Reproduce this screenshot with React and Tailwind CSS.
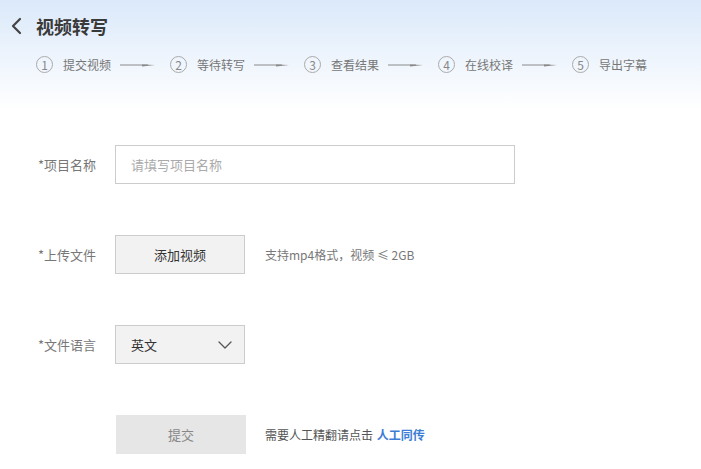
import React from 'react';

const font = { fontFamily: '"Noto Sans CJK SC", "Noto Sans", sans-serif' };

const steps = ['提交视频', '等待转写', '查看结果', '在线校译', '导出字幕'];

const StepArrow = () => (
  <svg width="36" height="6" viewBox="0 0 36 6" className="ml-[9px] mr-[14px]">
    <line x1="0" y1="3" x2="28" y2="3" stroke="#8a8a8a" strokeWidth="1" />
    <path d="M22 2.4 L35 3 L22 4.4 Z" fill="#8a8a8a" />
  </svg>
);

const ChevronDown = () => (
  <svg width="14" height="8" viewBox="0 0 14 8" fill="none">
    <path d="M1 1l6 6 6-6" stroke="#555" strokeWidth="1.3" strokeLinecap="round" strokeLinejoin="round" />
  </svg>
);

const App = () => {
  return (
    <div className="w-[701px] h-[469px] bg-white overflow-hidden" style={font}>
      {/* 头部 */}
      <div className="h-[110px] bg-gradient-to-b from-[#dbe9fa] to-white">
        <div className="flex items-center h-[24px] translate-y-[14px] pl-[10px]">
          <svg width="12" height="18" viewBox="0 0 12 18" fill="none">
            <path d="M10 2L3 9l7 7" stroke="#444" strokeWidth="2.2" strokeLinecap="round" strokeLinejoin="round" />
          </svg>
          <span className="ml-[14px] text-[18px] font-bold text-[#3a3a3a] leading-none">视频转写</span>
        </div>
        <div className="flex items-center pl-[36px] mt-[32px]">
          {steps.map((s, i) => (
            <div key={s} className="flex items-center">
              <span className="w-[17px] h-[17px] rounded-full border border-[#aaa] text-[#888] text-[12px] flex items-center justify-center leading-none">
                {i + 1}
              </span>
              <span className="ml-[10px] text-[12px] text-[#777] leading-none">{s}</span>
              {i < steps.length - 1 && <StepArrow />}
            </div>
          ))}
        </div>
      </div>

      {/* 表单 */}
      <div className="pl-[38px] pt-[35px] flex flex-col gap-[51px] text-[13px]">
        <div className="flex items-center h-[39px]">
          <label className="w-[77px] text-[#777]">*项目名称</label>
          <input
            className="w-[400px] h-[39px] border border-[#ccc] px-[15px] text-[13px] text-[#333] placeholder:text-[#aaa] outline-none"
            placeholder="请填写项目名称"
          />
        </div>

        <div className="flex items-center h-[39px]">
          <label className="w-[77px] text-[#777]">*上传文件</label>
          <button className="w-[130px] h-[39px] bg-[#f2f2f2] border border-[#ccc] text-[#333] text-[13px]">
            添加视频
          </button>
          <span className="ml-[20px] text-[12px] text-[#777]">支持mp4格式，视频 ≤ 2GB</span>
        </div>

        <div className="flex items-center h-[39px]">
          <label className="w-[77px] text-[#777]">*文件语言</label>
          <div className="w-[130px] h-[39px] bg-[#f2f2f2] border border-[#ccc] flex items-center justify-between pl-[15px] pr-[12px]">
            <span className="text-[#333]">英文</span>
            <ChevronDown />
          </div>
        </div>

        <div className="flex items-center h-[39px]">
          <div className="w-[78px]" />
          <button className="w-[130px] h-[39px] bg-[#e6e6e6] text-[#888] text-[13px]">提交</button>
          <span className="ml-[19px] text-[12px] text-[#555]">
            需要人工精翻请点击 <span className="text-[#3d7dd6] font-bold ml-[1px]">人工同传</span>
          </span>
        </div>
      </div>
    </div>
  );
};

export default App;
